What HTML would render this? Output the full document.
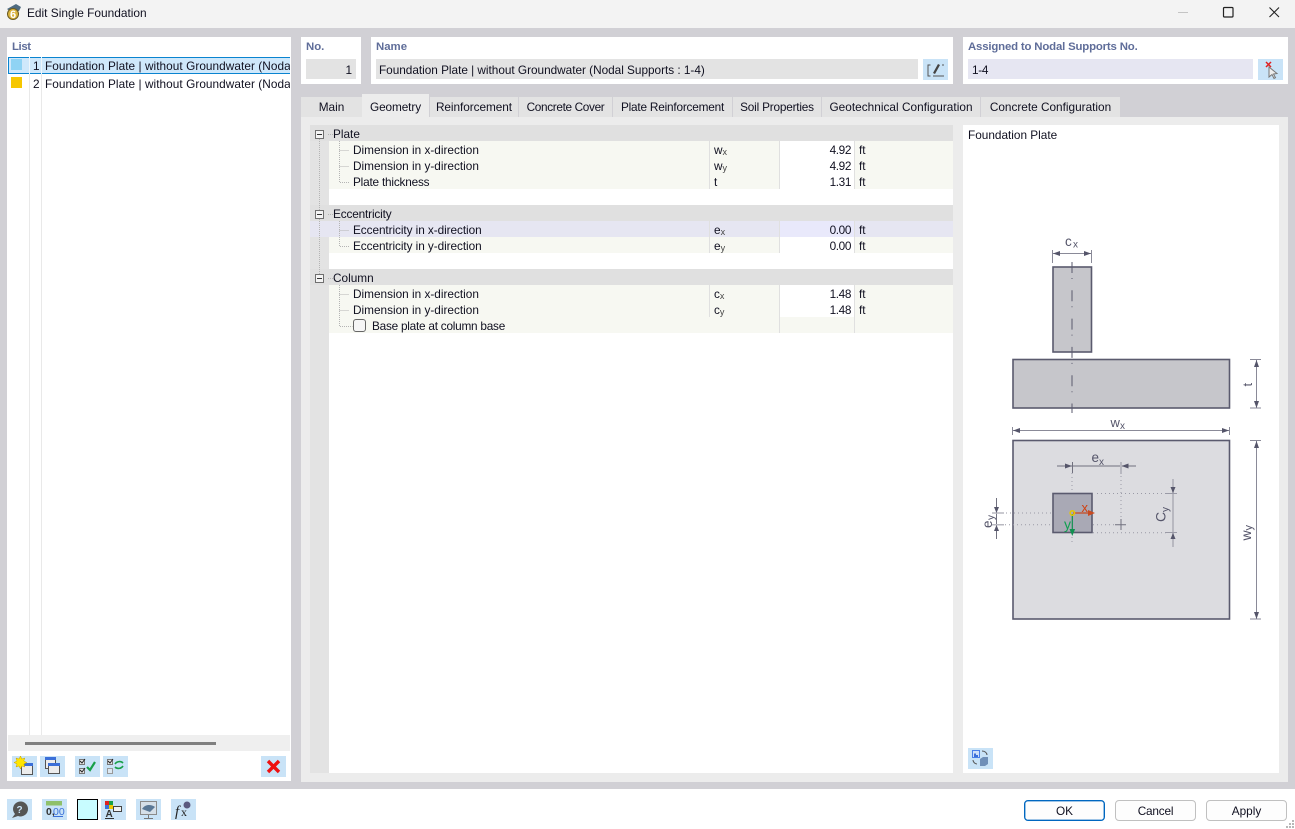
<!DOCTYPE html>
<html><head><meta charset="utf-8"><title>Edit Single Foundation</title>
<style>
html,body{margin:0;padding:0;width:1295px;height:829px;overflow:hidden;background:#fff}
body{position:relative;font-family:"Liberation Sans",sans-serif;font-size:11.8px;color:#101020}
.b{position:absolute}
.t{position:absolute;white-space:nowrap;line-height:16px;height:16px}
.h{position:absolute;white-space:nowrap;line-height:16px;font-weight:bold;color:#5f6d99;font-size:11.4px}
.ib{position:absolute;width:25px;height:21px;background:#c9e3f7}
.ib svg{position:absolute;left:0;top:0}
.tab{position:absolute;top:97px;height:20px;background:#e3e3e3;text-align:center;line-height:20px}
.r{text-align:right}
.n{letter-spacing:-.4px}
.btn{position:absolute;top:800px;width:79px;height:19px;border:1px solid #c0c0c0;border-radius:4px;text-align:center;line-height:20px;background:#fdfdfd}
sub{font-size:9px;line-height:0;vertical-align:-1px;color:#444}
</style></head><body>
<!-- title bar -->
<div class="b" style="left:0;top:0;width:1295px;height:28px;background:#f3f3f3"></div>
<svg class="b" style="left:5px;top:3px" width="18" height="18" viewBox="0 0 18 18"><path d="M2 6L11 1l5 3-2 4-8 1z" fill="#4f6b80"/><circle cx="8" cy="11" r="5.500" fill="#d9b23c" stroke="#6a5a20"/><text x="5" y="15" font-size="11" font-weight="bold" font-family="Liberation Sans" fill="#fff">6</text></svg>
<div class="t" style="left:27px;top:5px;font-size:11.9px">Edit Single Foundation</div>
<svg class="b" style="left:1170px;top:0" width="125" height="28"><path d="M8 12.500h10" stroke="#c4c4c4"/><rect x="53.500" y="7.500" width="9.500" height="9.500" rx="1" fill="none" stroke="#222" stroke-width="1.200"/><path d="M99.500 7.500l9.500 9.500M109 7.500l-9.500 9.500" stroke="#222" stroke-width="1.100"/></svg>
<div class="b" style="left:0;top:28px;width:1295px;height:761px;background:#d1d0d5"></div>

<!-- left panel -->
<div class="b" style="left:7px;top:37px;width:284px;height:744px;background:#fff"></div>
<div class="h" style="left:12px;top:39px;letter-spacing:-.4px">List</div>
<div class="b" style="left:29px;top:57px;width:1px;height:678px;background:#e9e9e9"></div>
<div class="b" style="left:41px;top:57px;width:1px;height:678px;background:#e9e9e9"></div>
<div class="b" style="left:8px;top:57px;width:282px;height:15px;background:#cfe8fb;border-top:1px solid #0a84d0;border-bottom:1px solid #0a84d0"></div>
<div class="b" style="left:8px;top:57px;width:1px;height:17px;background:#0a84d0"></div>
<div class="b" style="left:29px;top:57px;width:1px;height:17px;background:#eef6fc"></div>
<div class="b" style="left:41px;top:57px;width:1px;height:17px;background:#eef6fc"></div>
<div class="b" style="left:11px;top:59px;width:11px;height:11px;background:#8fd3f4"></div>
<div class="b" style="left:11px;top:77px;width:11px;height:11px;background:#f6c700"></div>
<div class="t" style="left:33px;top:58px">1</div>
<div class="t" style="left:33px;top:76px">2</div>
<div class="b" style="left:45px;top:58px;width:245px;height:16px;overflow:hidden"><div class="t" style="left:0;top:0;letter-spacing:.06px">Foundation Plate | without Groundwater (Nodal Supports : 1-4)</div></div>
<div class="b" style="left:45px;top:76px;width:245px;height:16px;overflow:hidden"><div class="t" style="left:0;top:0;letter-spacing:.06px">Foundation Plate | without Groundwater (Nodal Supports : 1-4)</div></div>
<div class="b" style="left:8px;top:735px;width:282px;height:16px;background:#efefef"></div>
<div class="b" style="left:25px;top:742px;width:191px;height:3px;background:#808080"></div>

<div class="ib" style="left:12px;top:756px"><svg width="25" height="21"><rect x="9.500" y="7.500" width="11" height="11" fill="#ececec" stroke="#555"/><rect x="9" y="7" width="12" height="3" fill="#3b6fd8"/><path d="M8.500 0l1.300 3 3-1-1 3 3 1.500-3 1.500 1 3-3-1-1.300 3-1.500-3-3 1 1-3-3-1.500 3-1.500-1-3 3 1z" fill="#ffe600" stroke="#c9a400" stroke-width=".5"/></svg></div>
<div class="ib" style="left:40px;top:756px"><svg width="25" height="21"><rect x="5.500" y="1.500" width="10" height="11" fill="#ececec" stroke="#555"/><rect x="5" y="1" width="11" height="3" fill="#3b6fd8"/><rect x="8.500" y="7.500" width="11" height="10" fill="#ececec" stroke="#555"/><rect x="8" y="7" width="12" height="3" fill="#3b6fd8"/></svg></div>
<div class="ib" style="left:75px;top:756px"><svg width="25" height="21"><rect x="4.500" y="3.500" width="5" height="5" fill="#e4e4e4" stroke="#777"/><rect x="4.500" y="12.500" width="5" height="5" fill="#e4e4e4" stroke="#777"/><path d="M5 5l2 2 3-4M5 14l2 2 3-4" fill="none" stroke="#222"/><path d="M12 11l3 3 5-8" fill="none" stroke="#18a048" stroke-width="2.200"/></svg></div>
<div class="ib" style="left:103px;top:756px"><svg width="25" height="21"><rect x="4.500" y="3.500" width="5" height="5" fill="#e4e4e4" stroke="#777"/><rect x="4.500" y="12.500" width="5" height="5" fill="#dce8f2" stroke="#999"/><path d="M5 5l2 2 3-4" fill="none" stroke="#222"/><path d="M12 8c2-3 6-3 8-1M20 10c-2 3-6 3-8 1" fill="none" stroke="#18a048" stroke-width="1.600"/></svg></div>
<div class="ib" style="left:261px;top:756px"><svg width="25" height="21"><path d="M7 5l11 11M18 5L7 16" stroke="#ee1111" stroke-width="3.400"/></svg></div>

<!-- No -->
<div class="b" style="left:301px;top:37px;width:60px;height:47px;background:#fff"></div>
<div class="h" style="left:306px;top:39px">No.</div>
<div class="b" style="left:306px;top:59px;width:50px;height:20px;background:#e3e3e3"></div>
<div class="t r" style="left:306px;top:62px;width:46px">1</div>
<!-- Name -->
<div class="b" style="left:371px;top:37px;width:582px;height:47px;background:#fff"></div>
<div class="h" style="left:376px;top:39px">Name</div>
<div class="b" style="left:376px;top:59px;width:542px;height:20px;background:#e3e3e3"></div>
<div class="t" style="left:379px;top:62px;letter-spacing:-.02px">Foundation Plate | without Groundwater (Nodal Supports : 1-4)</div>
<div class="ib" style="left:923px;top:59px"><svg width="25" height="21"><path d="M7.500 6H5v11h2.500" fill="none" stroke="#555"/><path d="M10 14l5-9 2 1-5 9z" fill="#444"/><path d="M10 17h11M19 6h2" stroke="#555"/></svg></div>
<!-- Assigned -->
<div class="b" style="left:963px;top:37px;width:325px;height:47px;background:#fff"></div>
<div class="h" style="left:968px;top:39px;letter-spacing:-.17px">Assigned to Nodal Supports No.</div>
<div class="b" style="left:968px;top:59px;width:285px;height:20px;background:#e6e6f2"></div>
<div class="t" style="left:972px;top:62px;letter-spacing:-.3px">1-4</div>
<div class="ib" style="left:1258px;top:59px"><svg width="25" height="21"><path d="M11 8l0 10 3-2.500 2 4 1.500-.8-2-3.700 3.500-.5z" fill="#eee" stroke="#777"/><path d="M8 3l5 5M13 3L8 8" stroke="#e02020" stroke-width="1.500"/></svg></div>

<!-- tabs -->
<div class="b" style="left:301px;top:117px;width:987px;height:665px;background:#ececec"></div>
<div class="tab" style="left:301px;width:61px">Main</div>
<div class="tab" style="left:362px;width:67px;top:94px;height:23px;line-height:26px;background:#ececec;letter-spacing:-.1px">Geometry</div>
<div class="tab" style="left:430px;width:88px;letter-spacing:-.05px">Reinforcement</div>
<div class="tab" style="left:519px;width:93px;letter-spacing:-.35px">Concrete Cover</div>
<div class="tab" style="left:613px;width:119px;letter-spacing:-.2px">Plate Reinforcement</div>
<div class="tab" style="left:733px;width:88px;letter-spacing:-.2px">Soil Properties</div>
<div class="tab" style="left:822px;width:158px;letter-spacing:.03px">Geotechnical Configuration</div>
<div class="tab" style="left:981px;width:139px">Concrete Configuration</div>

<!-- tree -->
<div class="b" style="left:310px;top:125px;width:643px;height:648px;background:#fff"></div>
<div class="b" style="left:310px;top:125px;width:19px;height:648px;background:#e3e3e3"></div>
<div class="b" style="left:310px;top:125px;width:643px;height:16px;background:#e0e0e0"></div>
<div class="b" style="left:329px;top:141px;width:624px;height:48px;background:#f7f8f2"></div>
<div class="b" style="left:310px;top:205px;width:643px;height:16px;background:#e0e0e0"></div>
<div class="b" style="left:310px;top:221px;width:643px;height:16px;background:#e6e6f2"></div>
<div class="b" style="left:329px;top:237px;width:624px;height:16px;background:#f7f8f2"></div>
<div class="b" style="left:310px;top:269px;width:643px;height:16px;background:#e0e0e0"></div>
<div class="b" style="left:329px;top:285px;width:624px;height:48px;background:#f7f8f2"></div>
<!-- value col -->
<div class="b" style="left:780px;top:141px;width:74px;height:48px;background:#fff"></div>
<div class="b" style="left:780px;top:221px;width:74px;height:16px;background:#e9e9fb"></div>
<div class="b" style="left:780px;top:237px;width:74px;height:16px;background:#fff"></div>
<div class="b" style="left:780px;top:285px;width:74px;height:32px;background:#fff"></div>
<!-- col lines -->
<div class="b" style="left:709px;top:141px;width:1px;height:48px;background:#e0e0e0"></div>
<div class="b" style="left:779px;top:141px;width:1px;height:48px;background:#e0e0e0"></div>
<div class="b" style="left:854px;top:141px;width:1px;height:48px;background:#e0e0e0"></div>
<div class="b" style="left:709px;top:221px;width:1px;height:32px;background:#e0e0e0"></div>
<div class="b" style="left:779px;top:221px;width:1px;height:32px;background:#e0e0e0"></div>
<div class="b" style="left:854px;top:221px;width:1px;height:32px;background:#e0e0e0"></div>
<div class="b" style="left:709px;top:285px;width:1px;height:32px;background:#e0e0e0"></div>
<div class="b" style="left:779px;top:285px;width:1px;height:48px;background:#e0e0e0"></div>
<div class="b" style="left:854px;top:285px;width:1px;height:48px;background:#e0e0e0"></div>
<!-- tree lines -->
<svg class="b" style="left:310px;top:125px" width="60" height="215">
<g stroke="#b4b4b4" stroke-dasharray="1 1" fill="none">
<path d="M9.500 14V158"/>
<path d="M18 9.500h5M18 89.500h5M18 153.500h5"/>
<path d="M29.500 16V57.500h10M29.500 25.500h10M29.500 41.500h10"/>
<path d="M29.500 96V121.500h10M29.500 105.500h10"/>
<path d="M29.500 160V201.500h13M29.500 169.500h10M29.500 185.500h10"/>
</g>
<g fill="#f4f4f4" stroke="#707070">
<rect x="5.500" y="5.500" width="8" height="8"/><rect x="5.500" y="85.500" width="8" height="8"/><rect x="5.500" y="149.500" width="8" height="8"/>
</g>
<path d="M7 9.500h5M7 89.500h5M7 153.500h5" stroke="#333"/>
<rect x="43.500" y="194.500" width="12" height="12" rx="2.500" fill="#f6f6f6" stroke="#666"/>
</svg>
<!-- tree text -->
<div class="t" style="left:333px;top:126px">Plate</div>
<div class="t" style="left:353px;top:142px">Dimension in x-direction</div>
<div class="t" style="left:353px;top:158px">Dimension in y-direction</div>
<div class="t" style="left:353px;top:174px;letter-spacing:-.2px">Plate thickness</div>
<div class="t" style="left:333px;top:206px;letter-spacing:-.15px">Eccentricity</div>
<div class="t" style="left:353px;top:222px;letter-spacing:-.07px">Eccentricity in x-direction</div>
<div class="t" style="left:353px;top:238px;letter-spacing:-.07px">Eccentricity in y-direction</div>
<div class="t" style="left:333px;top:270px">Column</div>
<div class="t" style="left:353px;top:286px">Dimension in x-direction</div>
<div class="t" style="left:353px;top:302px">Dimension in y-direction</div>
<div class="t" style="left:372px;top:318px;letter-spacing:-.24px">Base plate at column base</div>

<div class="t" style="left:714px;top:142px">w<sub>x</sub></div>
<div class="t" style="left:714px;top:158px">w<sub>y</sub></div>
<div class="t" style="left:714px;top:174px">t</div>
<div class="t" style="left:714px;top:222px">e<sub>x</sub></div>
<div class="t" style="left:714px;top:238px">e<sub>y</sub></div>
<div class="t" style="left:714px;top:286px">c<sub>x</sub></div>
<div class="t" style="left:714px;top:302px">c<sub>y</sub></div>

<div class="t r n" style="left:790px;top:142px;width:61px">4.92</div>
<div class="t r n" style="left:790px;top:158px;width:61px">4.92</div>
<div class="t r n" style="left:790px;top:174px;width:61px">1.31</div>
<div class="t r n" style="left:790px;top:222px;width:61px">0.00</div>
<div class="t r n" style="left:790px;top:238px;width:61px">0.00</div>
<div class="t r n" style="left:790px;top:286px;width:61px">1.48</div>
<div class="t r n" style="left:790px;top:302px;width:61px">1.48</div>
<div class="t" style="left:859px;top:142px">ft</div>
<div class="t" style="left:859px;top:158px">ft</div>
<div class="t" style="left:859px;top:174px">ft</div>
<div class="t" style="left:859px;top:222px">ft</div>
<div class="t" style="left:859px;top:238px">ft</div>
<div class="t" style="left:859px;top:286px">ft</div>
<div class="t" style="left:859px;top:302px">ft</div>

<!-- drawing panel -->
<div class="b" style="left:963px;top:125px;width:316px;height:648px;background:#fff"></div>
<div class="t" style="left:968px;top:127px">Foundation Plate</div>
<svg class="b" style="left:0;top:0" width="1295" height="829" font-family="Liberation Sans" fill="#55556a">
<rect x="1053" y="267" width="38.500" height="85" fill="#c6c6cb" stroke="#5a5a6e" stroke-width="1.600"/>
<rect x="1013" y="359.500" width="216.500" height="48.500" fill="#c6c6cb" stroke="#5a5a6e" stroke-width="1.600"/>
<path d="M1072 262V413" stroke="#5a5a6e" stroke-dasharray="11 5 1 11.300" fill="none"/>
<!-- cx -->
<path d="M1052.500 250v13M1091.500 250v13M1053 253.500h38" stroke="#8a8a98" fill="none"/>
<path d="M1053 253.500l7-2.500v5zM1091 253.500l-7-2.500v5z" fill="#55556a"/>
<text x="1065" y="246" font-size="13.500">c</text><text x="1073" y="247.500" font-size="10">x</text>
<!-- t -->
<path d="M1250 359.500h11M1250 408h11M1256.500 360v48" stroke="#8a8a98" fill="none"/>
<path d="M1256.500 360l-2.500 7h5zM1256.500 408l-2.500-7h5z"/>
<text transform="translate(1252,386.500) rotate(-90)" font-size="13">t</text>
<!-- wx -->
<path d="M1012.500 427v8M1229.500 427v8M1013 430.500h216" stroke="#8a8a98" fill="none"/>
<path d="M1013 430.500l7-2.500v5zM1229 430.500l-7-2.500v5z"/>
<text x="1110.500" y="427" font-size="13">w</text><text x="1120" y="429" font-size="10">x</text>
<!-- plan -->
<rect x="1013" y="440.500" width="216.500" height="178.500" fill="#dcdce0" stroke="#5a5a6e" stroke-width="1.600"/>
<g stroke="#9a9aa6" fill="none" stroke-dasharray="1 3">
<path d="M1072 473V543M1121 476V522M1097 493.500h72M1093 532.700h76M1006 513h46M1001 524.700h114"/>
</g>
<rect x="1053" y="493.500" width="39" height="39" fill="#a9a9b5" stroke="#5a5a6e" stroke-width="1.600"/>
<!-- ex -->
<path d="M1057 466h79M1072.500 462v11" stroke="#70707e" fill="none"/>
<path d="M1121 462v12" stroke="#b8b8c0" stroke-width="2"/>
<path d="M1072 466l-7-2.500v5zM1121.500 466l7-2.500v5z"/>
<text x="1091.500" y="462" font-size="13.500">e</text><text x="1099" y="465" font-size="10">x</text>
<path d="M1115 524.700h11M1121 519v11" stroke="#70707e" fill="none"/>
<!-- cy -->
<path d="M1173 479v68" stroke="#b8b8c0" stroke-width="2"/>
<path d="M1165 493.500h12M1165 532.500h12" stroke="#9a9aa6"/>
<path d="M1173 493l-2.500-6h5zM1173 533l-2.500 6h5z"/>
<text transform="translate(1165.500,522) rotate(-90)" font-size="14">C</text><text transform="translate(1168.500,512) rotate(-90)" font-size="10">y</text>
<!-- wy -->
<path d="M1250 440.500h11M1250 619h11M1256.500 441v178" stroke="#8a8a98" fill="none"/>
<path d="M1256.500 441l-2.500 7h5zM1256.500 619l-2.500-7h5z"/>
<text transform="translate(1251,540.500) rotate(-90)" font-size="14">w</text><text transform="translate(1252,530.500) rotate(-90)" font-size="11">y</text>
<!-- ey -->
<path d="M996.500 498v41" stroke="#70707e"/>
<path d="M992 513h12M992 524.700h12" stroke="#b8b8c0" stroke-width="1.500"/>
<path d="M996.500 513l-2.500-6h5zM996.500 525l-2.500 6h5z"/>
<text transform="translate(992,528) rotate(-90)" font-size="13.500">e</text><text transform="translate(994,520) rotate(-90)" font-size="10">y</text>
<!-- axes -->
<path d="M1073 513h17" stroke="#c84a20" stroke-width="1.200"/><path d="M1088 510l7 3-7 3z" fill="#c84a20"/>
<path d="M1072.300 514v17" stroke="#109050" stroke-width="1.200"/><path d="M1069.500 529l2.800 7 2.800-7z" fill="#109050"/>
<circle cx="1072.300" cy="513" r="2.200" fill="none" stroke="#e8c800" stroke-width="1.500"/>
<text x="1081.500" y="512" font-size="13" fill="#d04010">x</text>
<text x="1064" y="529" font-size="14" fill="#10a050">y</text>
</svg>
<div class="ib" style="left:968px;top:748px"><svg width="25" height="21"><rect x="4.500" y="2.500" width="7" height="7" fill="#cfe0fa" stroke="#4a7fe8"/><path d="M6 9V5.500h2V7h2v2z" fill="#3b6fd8"/><path d="M14 3c3 0 5 2 5 4M5 12c0 2 2 4 4 4" fill="none" stroke="#555"/><path d="M12 11l3-2h5v7l-3 2h-5z" fill="#6f8fb8"/></svg></div>

<!-- bottom bar -->
<div class="ib" style="left:7px;top:799px"><svg width="25" height="21"><path d="M5 19l3-4a7.500 7.500 0 1 1 3 2z" fill="#555"/><text x="9.500" y="14" font-size="10" font-weight="bold" font-family="Liberation Sans" fill="#c9e3f7">?</text></svg></div>
<div class="ib" style="left:42px;top:799px"><svg width="25" height="21"><rect x="4" y="2" width="16" height="4.500" fill="#8fc06a"/><text x="4" y="16" font-size="10.500" font-family="Liberation Sans" fill="#333" font-weight="bold">0,</text><text x="11" y="16" font-size="10.500" font-family="Liberation Sans" fill="#3b6fd8">00</text><path d="M11 17.500h10" stroke="#3b6fd8"/></svg></div>
<div class="b" style="left:77px;top:799px;width:19px;height:19px;background:#c8fcff;border:1.500px solid #000"></div>
<div class="ib" style="left:101px;top:799px"><svg width="25" height="21"><rect x="4" y="2" width="4" height="4" fill="#e02020"/><rect x="8" y="2" width="4" height="4" fill="#18a048"/><rect x="4" y="6" width="4" height="4" fill="#3b6fd8"/><rect x="8" y="6" width="4" height="4" fill="#f0c800"/><text x="4.500" y="18" font-size="10" font-weight="bold" font-family="Liberation Sans" fill="#333">A</text><rect x="12.500" y="7.500" width="8" height="5" fill="#f3f3f3" stroke="#444"/><path d="M4 19.500h9" stroke="#333"/></svg></div>
<div class="ib" style="left:136px;top:799px"><svg width="25" height="21"><rect x="4.500" y="2.500" width="16" height="13" fill="#d5dfe8" stroke="#8a8a8a"/><path d="M6 10c3-5 9-5 13-2l-5 5z" fill="#5a7896"/><path d="M12.500 16v3M8 19.500h9" stroke="#777"/></svg></div>
<div class="ib" style="left:171px;top:799px"><svg width="25" height="21"><text x="4" y="17" font-size="15" font-style="italic" font-family="Liberation Serif" fill="#222">f</text><text x="10" y="17" font-size="12" font-family="Liberation Serif" fill="#222">x</text><circle cx="16" cy="6" r="3.500" fill="#5a5a80"/></svg></div>

<div class="btn" style="left:1024px;width:79px;border:1px solid #0067c0;box-shadow:inset 0 0 0 .4px #0067c0">OK</div>
<div class="btn" style="left:1115px;letter-spacing:-.2px">Cancel</div>
<div class="btn" style="left:1206px">Apply</div>
<svg class="b" style="left:1284px;top:818px" width="11" height="11"><g fill="#b8b8b8"><rect x="8" y="2" width="2" height="2"/><rect x="8" y="5" width="2" height="2"/><rect x="8" y="8" width="2" height="2"/><rect x="5" y="5" width="2" height="2"/><rect x="5" y="8" width="2" height="2"/><rect x="2" y="8" width="2" height="2"/></g></svg>
</body></html>
